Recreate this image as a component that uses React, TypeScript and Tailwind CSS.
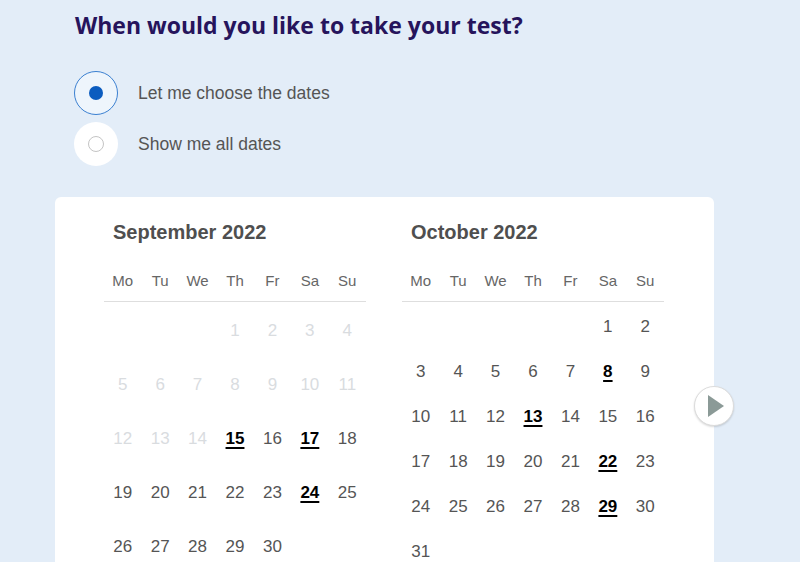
import React from 'react'

type Day = { n: number; state: 'off' | 'on' | 'open' } | null

const HEADS = ['Mo', 'Tu', 'We', 'Th', 'Fr', 'Sa', 'Su']

function buildMonth(offset: number, days: number, disabledUntil: number, open: number[]): Day[] {
  const cells: Day[] = []
  for (let i = 0; i < offset; i++) cells.push(null)
  for (let d = 1; d <= days; d++) {
    cells.push({ n: d, state: d <= disabledUntil ? 'off' : open.includes(d) ? 'open' : 'on' })
  }
  while (cells.length % 7 !== 0) cells.push(null)
  return cells
}

const MONTHS = [
  { title: 'September 2022', cells: buildMonth(3, 30, 14, [15, 17, 24]) },
  { title: 'October 2022', cells: buildMonth(5, 31, 0, [8, 13, 22, 29]) },
]

function Month({ title, cells }: { title: string; cells: Day[] }) {
  const rows: Day[][] = []
  for (let i = 0; i < cells.length; i += 7) rows.push(cells.slice(i, i + 7))
  return (
    <div className="w-[262px] flex flex-col">
      <h3 className="pl-[9px] text-[20px] leading-6 font-bold text-[#4f4f4f]">{title}</h3>
      <div className="mt-[18px] grid grid-cols-7 h-10 items-center border-b border-[#dedede]">
        {HEADS.map((h) => (
          <span key={h} className="text-center text-[15px] text-[#666]">{h}</span>
        ))}
      </div>
      <div className="mt-[2px] h-[270px] flex flex-col">
        {rows.map((r, i) => (
          <div key={i} className="flex-1 grid grid-cols-7 items-center">
            {r.map((d, j) => (
              <span key={j} className="text-center text-[17px] leading-5">
                {d && d.state === 'off' && <span className="text-[#d9dcdf]">{d.n}</span>}
                {d && d.state === 'on' && <span className="text-[#555]">{d.n}</span>}
                {d && d.state === 'open' && (
                  <span className="font-bold text-black underline underline-offset-[3px] decoration-2">{d.n}</span>
                )}
              </span>
            ))}
          </div>
        ))}
      </div>
    </div>
  )
}

export default function App() {
  return (
    <div className="w-[800px] h-[562px] overflow-hidden bg-[#e3edf8] font-['Liberation_Sans',Arial,sans-serif]">
      <div className="pl-[75px] pt-[11px]">
        <h1 className="font-['Open_Sans',sans-serif] text-[23px] leading-7 font-bold text-[#26145c]">
          When would you like to take your test?
        </h1>
        <div className="mt-[32px] flex flex-col gap-[7px] -ml-px">
          <label className="flex items-center gap-5">
            <span className="w-11 h-11 rounded-full border-[1.5px] border-[#3b80d1] bg-[#eef5fc] flex items-center justify-center">
              <span className="w-[14px] h-[14px] rounded-full bg-[#0b5cbf]" />
            </span>
            <span className="text-[17.5px] text-[#555]">Let me choose the dates</span>
          </label>
          <label className="flex items-center gap-5">
            <span className="w-11 h-11 rounded-full bg-white flex items-center justify-center">
              <span className="w-4 h-4 rounded-full border border-[#c4c4c4]" />
            </span>
            <span className="text-[17.5px] text-[#555]">Show me all dates</span>
          </label>
        </div>
      </div>
      <div className="relative ml-[55px] mt-[31px] w-[659px] bg-white rounded-[6px] pt-[23px] pl-[49px] pr-[50px] pb-6">
        <div className="flex gap-9">
          {MONTHS.map((m) => (
            <Month key={m.title} title={m.title} cells={m.cells} />
          ))}
        </div>
        <button className="absolute right-[-20px] top-[189px] w-10 h-10 rounded-full bg-white border border-[#dcdcdc] shadow-[0_1px_2px_rgba(0,0,0,0.15)] flex items-center justify-center">
          <svg width="18" height="22" viewBox="0 0 18 22" className="ml-[3px]">
            <path d="M1 0 L17 11 L1 22 Z" fill="#8b9a97" />
          </svg>
        </button>
      </div>
    </div>
  )
}
